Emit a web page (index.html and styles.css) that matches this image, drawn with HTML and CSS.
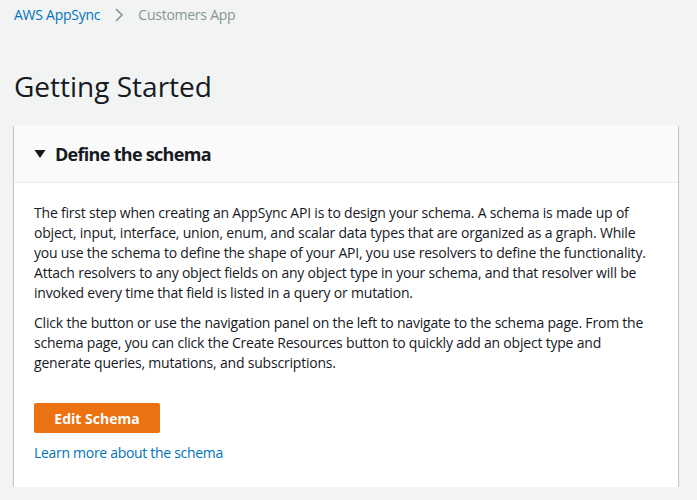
FILE: index.html
```html
<!DOCTYPE html>
<html>
<head>
<meta charset="utf-8">
<link rel="stylesheet" href="styles.css">
</head>
<body>
<nav class="crumbs">
  <a class="crumb-link" href="#">AWS AppSync</a>
  <svg class="crumb-sep" width="10" height="16" viewBox="0 0 10 16"><path d="M2 2 L8 8 L2 14" fill="none" stroke="#879596" stroke-width="1.6"/></svg>
  <span class="crumb-current">Customers App</span>
</nav>
<h1 class="title">Getting Started</h1>
<section class="card">
  <header class="card-head">
    <svg class="caret" width="12" height="10" viewBox="0 0 12 10"><path d="M0.5 1 L11.5 1 L6 9 Z" fill="#16191f"/></svg>
    <h2 class="card-title">Define the schema</h2>
  </header>
  <div class="card-body">
    <p>The first step when creating an AppSync API is to design your schema. A schema is made up of object, input, interface, union, enum, and scalar data types that are organized as a graph. While you use the schema to define the shape of your API, you use resolvers to define the functionality. Attach resolvers to any object fields on any object type in your schema, and that resolver will be invoked every time that field is listed in a query or mutation.</p>
    <p>Click the button or use the navigation panel on the left to navigate to the schema page. From the schema page, you can click the Create Resources button to quickly add an object type and generate queries, mutations, and subscriptions.</p>
    <button class="btn">Edit Schema</button>
    <a class="learn" href="#">Learn more about the schema</a>
  </div>
</section>
</body>
</html>
```
FILE: styles.css
```css
html, body { margin: 0; padding: 0; }
body {
  background: #f2f3f3;
  font-family: "Open Sans", sans-serif;
  color: #16191f;
  font-size: 14px;
  padding: 0 19px 0 14px;
}
.crumbs {
  display: flex;
  align-items: center;
  height: 29px;
  gap: 14px;
  font-size: 14px;
  letter-spacing: -0.25px;
}
.crumb-link { color: #0073bb; text-decoration: none; }
.crumb-current { color: #879596; }
.title {
  margin: 39px 0 0 0;
  font-size: 28px;
  font-weight: 400;
  line-height: 36px;
  color: #16191f;
}
.card {
  margin-top: 21px;
  background: #fff;
  box-shadow: 0 1px 1px 0 rgba(0,28,36,0.3), 1px 1px 1px 0 rgba(0,28,36,0.15), -1px 1px 1px 0 rgba(0,28,36,0.15);
}
.card-head {
  display: flex;
  align-items: center;
  gap: 9px;
  height: 57px;
  padding: 0 20px;
  background: #fafafa;
  border-bottom: 1px solid #eaeded;
}
.card-title {
  margin: 0;
  font-size: 18px;
  font-weight: 700;
  line-height: 24px;
  letter-spacing: -0.7px;
}
.card-body {
  padding: 20px 20px 24px 20px;
}
.card-body p {
  margin: 0 0 10px 0;
  line-height: 20px;
  letter-spacing: -0.2px;
}
.btn {
  display: block;
  margin-top: 30px;
  width: 126px;
  height: 30px;
  border: 0;
  border-radius: 2px;
  background: #ec7211;
  color: #fff;
  font-family: inherit;
  font-size: 14px;
  font-weight: 700;
}
.learn {
  display: block;
  margin-top: 10px;
  color: #0073bb;
  text-decoration: none;
  line-height: 20px;
  letter-spacing: -0.3px;
}
```
